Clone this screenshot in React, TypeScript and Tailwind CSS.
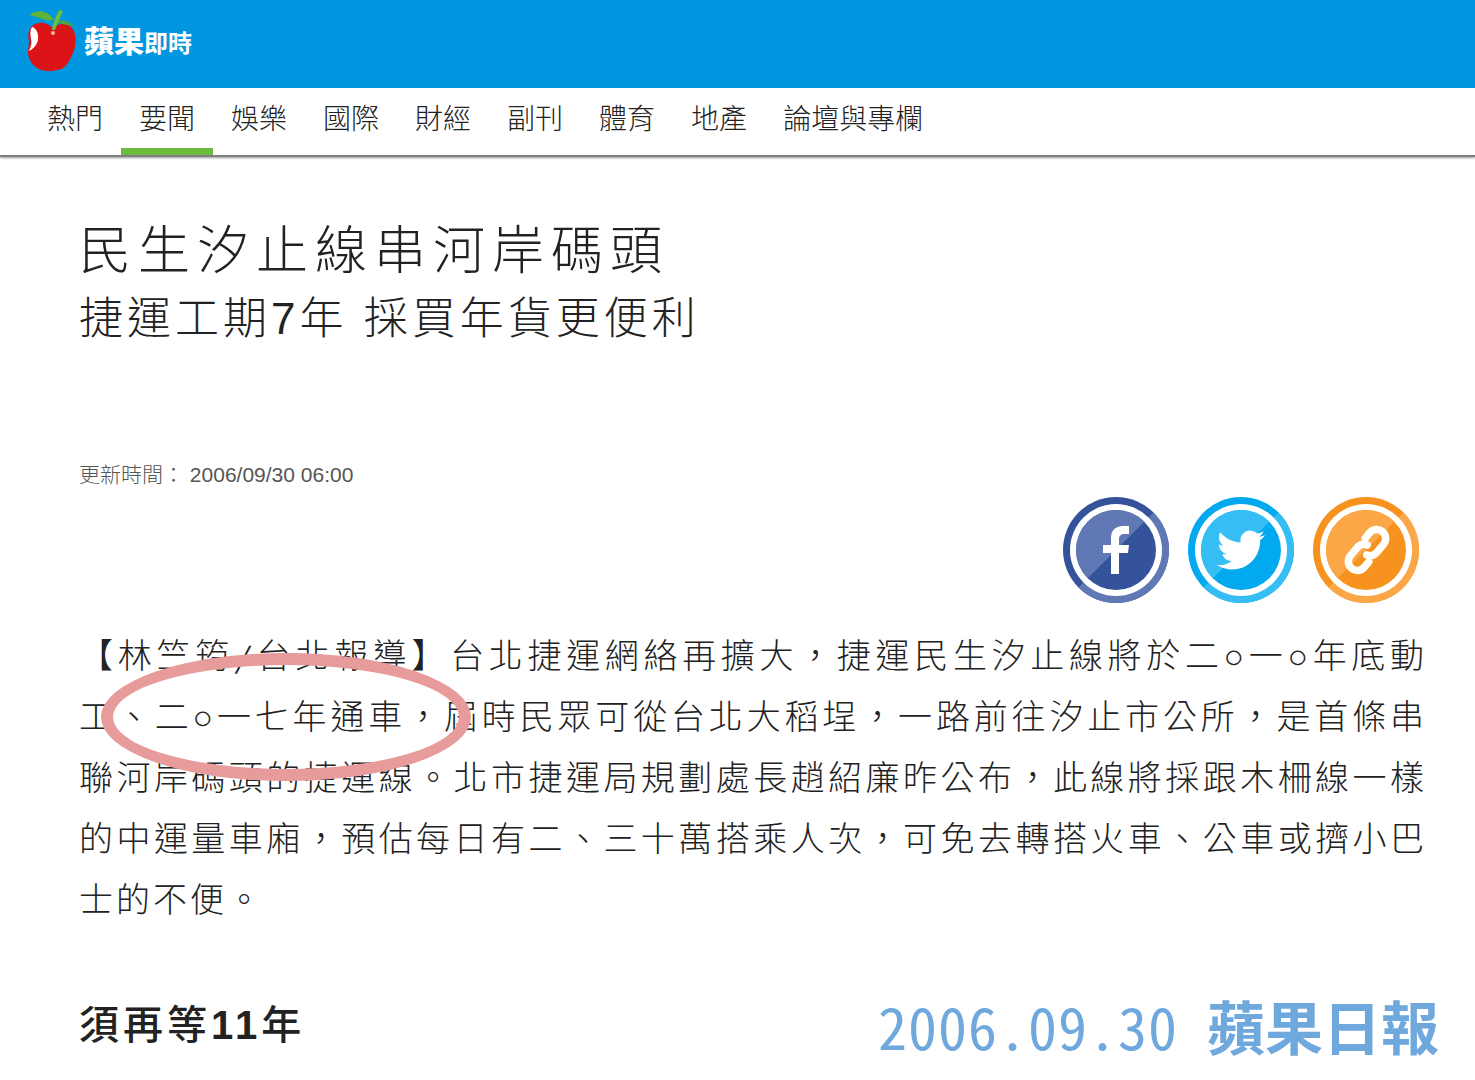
import * as React from "react"

const SECTIONS = ["熱門", "要聞", "娛樂", "國際", "財經", "副刊", "體育", "地產", "論壇與專欄"]
const ACTIVE = "要聞"

function AppleLogo() {
  return (
    <svg viewBox="0 0 50 62" className="h-[62px] w-[50px] shrink-0" aria-hidden="true">
      <path d="M12 13C18 12 22 15 26 18C31 14 38 12 43 16C50 22 50 34 46 43C42 53 37 60 30 60C27 60 26 62 22 61C18 61 15 61 10 58C4 54 1 48 1 42C1 38 2 35 2 31C0 24 2 14 12 13Z" fill="#dc1417" />
      <path d="M5 17C9 18 12 23 11 30C10 35 6 39 2 41C4 36 5 34 4 29C3 24 3 20 5 17Z" fill="#fff" />
      <path d="M2 5C10 -1 21 0 27 10C18 12 13 7 2 5Z" fill="#5fb336" />
      <path d="M28 11C36 10 43 11 47 16C40 15 33 14 28 11Z" fill="#4fa63a" />
      <path d="M32 0L36 1C33 8 31 12 28 20L25 20C26 12 29 7 32 0Z" fill="#6fbe3f" />
      <circle cx="26" cy="23" r="2" fill="#f6b9a0" />
    </svg>
  )
}

type BadgeProps = {
  id: string
  label: string
  dark: string
  light: string
  children: React.ReactNode
}

/** Round share badge: ring and disc are split diagonally into two opposite shades. */
function ShareBadge({ id, label, dark, light, children }: BadgeProps) {
  return (
    <a href="#share" aria-label={label} className="block size-[106px]">
      <svg viewBox="0 0 106 106" className="size-full" aria-hidden="true">
        <clipPath id={`${id}-ring`}>
          <path d="M106 0V106H0Z" />
        </clipPath>
        <clipPath id={`${id}-disc`}>
          <path d="M0 0H106L0 106Z" />
        </clipPath>
        <circle cx="53" cy="53" r="53" fill={dark} />
        <circle cx="53" cy="53" r="53" fill={light} clipPath={`url(#${id}-ring)`} />
        <circle cx="53" cy="53" r="46" fill="#fff" />
        <circle cx="53" cy="53" r="40" fill={dark} />
        <circle cx="53" cy="53" r="40" fill={light} clipPath={`url(#${id}-disc)`} />
        {children}
      </svg>
    </a>
  )
}

export default function App() {
  return (
    <div lang="zh-TW" className="min-h-screen bg-white font-['Liberation_Sans','Noto_Sans_CJK_TC',sans-serif] text-[#222]">
      <header>
        <div className="flex h-[88px] items-start bg-[#0096e0] pt-[10px] pl-[27px]">
          <a href="#home" className="flex text-white">
            <AppleLogo />
            <span className="ml-[7px] pt-[14px] text-3xl leading-9 font-black">
              蘋果<span className="text-2xl leading-9 font-bold">即時</span>
            </span>
          </a>
        </div>
        <nav className="border-b-2 border-[#808080] pl-[29px] shadow-[0_1px_2px_rgba(0,0,0,0.4)]">
          <ul className="flex">
            {SECTIONS.map((name) => (
              <li key={name}>
                <a
                  href="#section"
                  aria-current={name === ACTIVE ? "page" : undefined}
                  className="block h-[67px] border-b-7 border-transparent px-[18px] pt-[14px] text-[28px] leading-9 font-light aria-[current=page]:border-[#6cbb3c]"
                >
                  {name}
                </a>
              </li>
            ))}
          </ul>
        </nav>
      </header>

      <main className="pt-[60px]">
        <article className="pr-12 pl-[79px]">
          <h1 className="text-[52px] leading-[68px] font-light tracking-[7px]">民生汐止線串河岸碼頭</h1>
          <p className="text-[44px] leading-[68px] font-light tracking-[4px]">捷運工期7年 採買年貨更便利</p>
          <p className="mt-[106px] text-[21px] leading-8 font-light text-[#555]">
            更新時間： <time dateTime="2006-09-30T06:00">2006/09/30 06:00</time>
          </p>

          <div className="mt-[6px] mr-2 flex justify-end gap-[19px]">
            <ShareBadge id="fb" label="Facebook" dark="#34539a" light="#6078b4">
              <path d="M48 77V56H40V48H48V41C48 33 53 29 60 29H66V37H61C58 37 56 39 56 42V48H66L65 56H56V77Z" fill="#fff" />
            </ShareBadge>
            <ShareBadge id="tw" label="Twitter" dark="#03a9ee" light="#35bdf4">
              <path
                transform="translate(29 29) scale(2)"
                d="M23.953 4.57a10 10 0 01-2.825.775 4.958 4.958 0 002.163-2.723c-.951.555-2.005.959-3.127 1.184a4.92 4.92 0 00-8.384 4.482C7.69 8.095 4.067 6.13 1.64 3.162a4.822 4.822 0 00-.666 2.475c0 1.71.87 3.213 2.188 4.096a4.904 4.904 0 01-2.228-.616v.06a4.923 4.923 0 003.946 4.827 4.996 4.996 0 01-2.212.085 4.936 4.936 0 004.604 3.417 9.867 9.867 0 01-6.102 2.105c-.39 0-.779-.023-1.17-.067a13.995 13.995 0 007.557 2.209c9.053 0 13.998-7.496 13.998-13.985 0-.21 0-.42-.015-.63A9.935 9.935 0 0024 4.59z"
                fill="#fff"
              />
            </ShareBadge>
            <ShareBadge id="link" label="Link" dark="#f7921e" light="#fba747">
              <g transform="translate(54 53) rotate(-50)" fill="none" stroke="#fff" strokeWidth="7.5" strokeLinecap="round">
                <path d="M-8 9H-15A9 9 0 0 1 -15 -9H-4A9 9 0 0 1 4 -3" />
                <path d="M8 -9H15A9 9 0 0 1 15 9H4A9 9 0 0 1 -4 3" />
              </g>
            </ShareBadge>
          </div>

          <div className="relative mt-[23px]">
            <p className="text-justify text-[34px] leading-[61px] font-light tracking-[3px]">
              【林竺筠<span className="mx-[2px] font-['DejaVu_Sans_Mono',monospace] text-[24px] leading-8">╱</span>台北報導】台北捷運網絡再擴大，捷運民生汐止線將於二○一○年底動工、二○一七年通車，屆時民眾可從台北大稻埕，一路前往汐止市公所，是首條串聯河岸碼頭的捷運線。北市捷運局規劃處長趙紹廉昨公布，此線將採跟木柵線一樣的中運量車廂，預估每日有二、三十萬搭乘人次，可免去轉搭火車、公車或擠小巴士的不便。
            </p>
            {/* marker ring round the opening-year phrase */}
            <div className="absolute top-[27px] left-[22px] h-[128px] w-[370px] rounded-[50%] border-12 border-[#e79b9b]" />
          </div>
        </article>

        <div className="mt-[60px] flex items-center justify-between pr-9 pl-[79px]">
          <h2 className="text-[40px] leading-[68px] font-medium tracking-[4px]">
            須再等<span className="font-bold">11</span>年
          </h2>
          <p className="font-['Noto_Sans_Mono_CJK_TC','Noto_Sans_CJK_TC',sans-serif] text-[58px] leading-[68px] text-[#6fa8dc]">
            <span className="tracking-[1px]">2006.09.30</span> <span className="font-bold">蘋果日報</span>
          </p>
        </div>
      </main>
    </div>
  )
}
